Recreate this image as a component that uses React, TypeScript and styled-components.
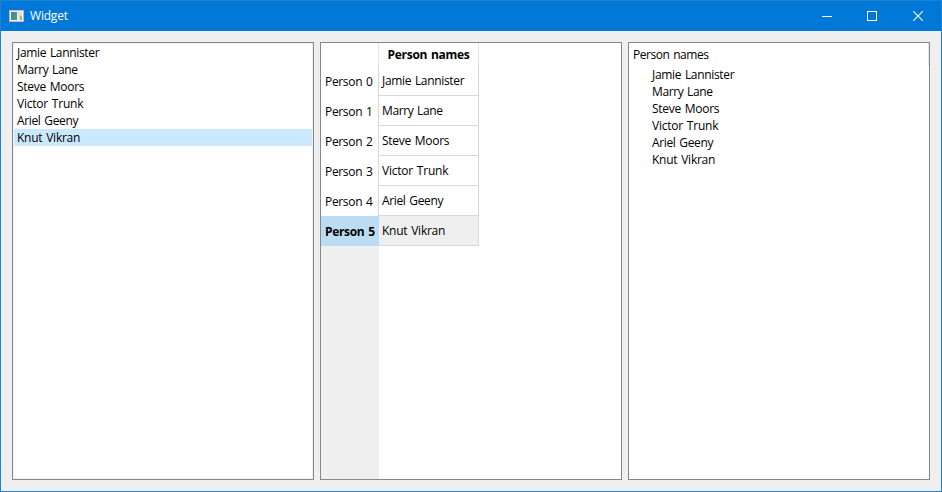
import React from 'react';
import styled, { createGlobalStyle } from 'styled-components';

const GlobalStyle = createGlobalStyle`
  * { box-sizing: border-box; }
  body { margin: 0; }
`;

const people = [
  { name: 'Jamie Lannister', tracking: -0.33 },
  { name: 'Marry Lane', tracking: -0.38 },
  { name: 'Steve Moors', tracking: -0.28 },
  { name: 'Victor Trunk', tracking: -0.23 },
  { name: 'Ariel Geeny', tracking: -0.35 },
  { name: 'Knut Vikran', tracking: -0.25 },
];
const selected = 5;

const Window = styled.div`
  display: flex;
  flex-direction: column;
  width: 942px;
  height: 492px;
  border: 1px solid #1883d7;
  background: #efefef;
  color: #000;
  font: 12px/17px 'Open Sans', 'Noto Sans', sans-serif;
  white-space: nowrap;
  overflow: hidden;
`;

const TitleBar = styled.header`
  display: flex;
  align-items: center;
  flex: none;
  height: 30px;
  padding-left: 8px;
  background: #0078d7;
  color: #fff;
`;

const Title = styled.span`
  flex: 1;
  margin-left: 5px;
  padding-bottom: 2px;
  letter-spacing: -0.2px;
`;

const CaptionButton = styled.button<{ $width: number }>`
  display: flex;
  align-items: center;
  justify-content: center;
  width: ${(p) => p.$width}px;
  height: 30px;
  padding: 0;
  border: 0;
  background: none;
  color: #fff;
`;

const Content = styled.main`
  display: flex;
  flex: 1;
  gap: 6px;
  padding: 11px;
`;

const Panel = styled.section`
  display: flex;
  flex-direction: column;
  width: 302px;
  height: 438px;
  border: 1px solid #828790;
  background: #fff;
`;

const ListPanel = styled(Panel)`
  box-shadow: inset 0 0 0 1px #f0f0f0;
  padding: 1px;
`;

const Label = styled.span<{ $tracking?: number }>`
  letter-spacing: ${(p) => p.$tracking ?? 0}px;
  word-spacing: 1px;
`;

const ListItem = styled.div<{ $selected?: boolean }>`
  height: 17px;
  padding-left: 3px;
  background: ${(p) => (p.$selected ? '#cce8ff' : 'transparent')};
`;

const TableHeader = styled.div`
  display: flex;
  height: 23px;
`;

const Corner = styled.div`
  width: 58px;
  border-right: 1px solid #e5e5e5;
`;

const ColumnHeader = styled.div`
  width: 100px;
  padding-top: 3px;
  border-right: 1px solid #e5e5e5;
  text-align: center;
  font-weight: bold;
`;

const TableRow = styled.div`
  display: flex;
  height: 30px;
`;

const RowHeader = styled.div<{ $selected: boolean }>`
  width: 58px;
  padding: 7px 0 0 4px;
  border-right: 1px solid ${(p) => (p.$selected ? '#bcdcf4' : '#d8d8d8')};
  background: ${(p) => (p.$selected ? '#bcdcf4' : '#fff')};
  font-weight: ${(p) => (p.$selected ? 'bold' : 'normal')};
`;

const Cell = styled.div<{ $selected: boolean }>`
  width: 100px;
  padding: 6px 0 0 3px;
  border-right: 1px solid #d8d8d8;
  border-bottom: 1px solid #d8d8d8;
  background: ${(p) => (p.$selected ? '#efefef' : '#fff')};
`;

const HeaderGutter = styled.div`
  flex: 1;
  width: 58px;
  background: #efefef;
`;

const TreeHeader = styled.div`
  height: 23px;
  padding: 3px 0 0 4px;
  border-right: 1px solid #e5e5e5;
`;

const TreeItem = styled.div`
  height: 17px;
  padding-left: 23px;
`;

const AppIcon = () => (
  <svg width="16" height="16" viewBox="0 0 16 16">
    <defs>
      <linearGradient id="pane" x1="0" y1="0" x2="1" y2="1">
        <stop offset="0" stopColor="#4b7fae" />
        <stop offset="1" stopColor="#4f9c6b" />
      </linearGradient>
    </defs>
    <rect x="0.5" y="2.5" width="14" height="11" fill="#f3f3f3" stroke="#b9b9b9" />
    <rect x="2" y="4" width="6" height="8" fill="url(#pane)" />
    <rect x="9" y="4" width="2" height="8" fill="#dcdfe2" />
    <rect x="11" y="4" width="2" height="4" fill="#d3dde4" />
    <rect x="11" y="8" width="2" height="4" fill="#8fb9a0" />
  </svg>
);

export default function App() {
  return (
    <Window>
      <GlobalStyle />
      <TitleBar>
        <AppIcon />
        <Title>Widget</Title>
        <CaptionButton $width={44} aria-label="Minimize">
          <svg width="10" height="10" shapeRendering="crispEdges">
            <path d="M0 5.5H10" stroke="currentColor" />
          </svg>
        </CaptionButton>
        <CaptionButton $width={46} aria-label="Maximize">
          <svg width="10" height="10" shapeRendering="crispEdges">
            <rect x="0.5" y="0.5" width="9" height="9" fill="none" stroke="currentColor" />
          </svg>
        </CaptionButton>
        <CaptionButton $width={46} aria-label="Close">
          <svg width="10" height="10">
            <path d="M0.2 0.2L9.8 9.8M9.8 0.2L0.2 9.8" stroke="currentColor" strokeWidth="1.1" />
          </svg>
        </CaptionButton>
      </TitleBar>
      <Content>
        <ListPanel>
          {people.map((p, i) => (
            <ListItem key={p.name} $selected={i === selected}>
              <Label $tracking={p.tracking}>{p.name}</Label>
            </ListItem>
          ))}
        </ListPanel>
        <Panel>
          <TableHeader>
            <Corner />
            <ColumnHeader>
              <Label $tracking={-0.3}>Person names</Label>
            </ColumnHeader>
          </TableHeader>
          {people.map((p, i) => (
            <TableRow key={p.name}>
              <RowHeader $selected={i === selected}>
                <Label $tracking={-0.33}>Person {i}</Label>
              </RowHeader>
              <Cell $selected={i === selected}>
                <Label $tracking={p.tracking}>{p.name}</Label>
              </Cell>
            </TableRow>
          ))}
          <HeaderGutter />
        </Panel>
        <Panel>
          <TreeHeader>
            <Label $tracking={-0.45}>Person names</Label>
          </TreeHeader>
          {people.map((p) => (
            <TreeItem key={p.name}>
              <Label $tracking={p.tracking}>{p.name}</Label>
            </TreeItem>
          ))}
        </Panel>
      </Content>
    </Window>
  );
}
